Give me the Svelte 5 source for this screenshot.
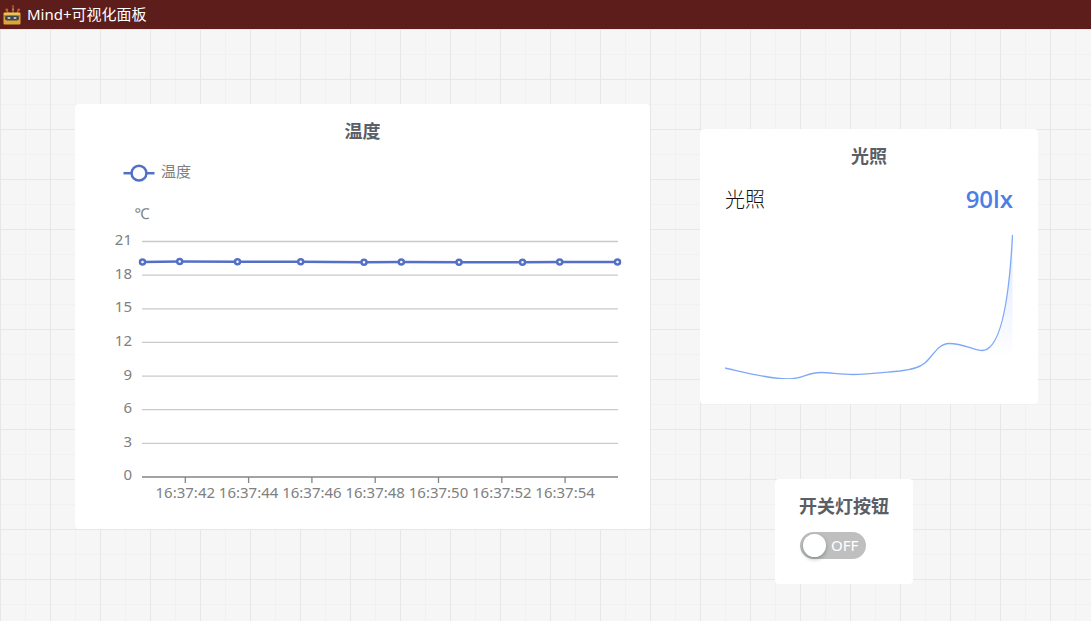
<script>
  const tempTicks = [21, 18, 15, 12, 9, 6, 3, 0];
  const timeTicks = ['16:37:42', '16:37:44', '16:37:46', '16:37:48', '16:37:50', '16:37:52', '16:37:54'];
  const samples = [
    [42.5, 19.18], [79.7, 19.22], [137.5, 19.2], [200.7, 19.2], [264, 19.16],
    [301.3, 19.17], [359, 19.14], [422.5, 19.14], [459.7, 19.18], [517.5, 19.18]
  ];

  const baseY = 328;
  const unit = 235.5 / 21;
  const yOf = (value) => baseY - value * unit;
  const xOfTick = (i) => 85.3 + i * 63.3;
  const linePoints = samples.map(([x, v]) => `${x},${yOf(v)}`).join(' ');

  const lightCurve =
    'M0 133 C18 137 44 144 63 144 C78 144 82 137.5 96 137.5 C106 137.5 114 139.5 128 139.5 C142 139.5 158 137.5 175 136 C186 134.5 194 133 200 128 C208 121 213 108.5 224 108.5 C238 108.5 250 115.5 257 115.5 C275 115.5 284 68 287.5 0';

  let on = $state(false);
</script>

<div class="page">
  <header class="titlebar">
    <svg class="logo" viewBox="0 0 18 20" aria-hidden="true">
      <path d="M10 8V1.5M5.2 8 4 5M13.8 8l1.8-3" stroke="#8d7a58" stroke-width="1.2" fill="none" />
      <circle cx="10" cy="1.2" r="1.2" fill="#a9442e" />
      <circle cx="3.8" cy="5" r="1.4" fill="#d0592d" />
      <circle cx="15.7" cy="4.8" r="1.4" fill="#d0592d" />
      <circle cx="10" cy="4.6" r="1" fill="#c9953f" />
      <rect x="0.5" y="7.6" width="17" height="12" rx="1" fill="#dfa536" />
      <rect x="1.2" y="7.8" width="15.6" height="2" fill="#f0c463" />
      <rect x="0.3" y="10.6" width="17.4" height="1" fill="#8f6c2c" />
      <rect x="2" y="10.8" width="14" height="4.6" rx="2" fill="#41474b" />
      <ellipse cx="6" cy="13" rx="1.6" ry="1" fill="#c5cbc8" />
      <ellipse cx="12" cy="13" rx="1.6" ry="1" fill="#c5cbc8" />
    </svg>
    <span>Mind+可视化面板</span>
  </header>

  <main class="board">
    <section class="card temperature">
      <h2>温度</h2>
      <svg class="chart" viewBox="0 0 525 360" role="img" aria-label="温度">
        <path class="series" d="M23.5 24.2h31" />
        <circle class="legend-dot" cx="39" cy="24.2" r="7.4" />
        <text x="61" y="28">温度</text>
        <text x="42" y="70" text-anchor="middle">℃</text>

        {#each tempTicks as value}
          {#if value > 0}
            <path class="gridline" d={`M42 ${yOf(value)}H518`} />
          {/if}
          <text x="32" y={Math.ceil(yOf(value)) + 3} text-anchor="end">{value}</text>
        {/each}

        <path class="axis" d={`M42 ${baseY}H518`} />
        {#each timeTicks as time, i}
          <path class="axis" d={`M${xOfTick(i)} ${baseY}v6`} />
          <text x={xOfTick(i)} y="349" text-anchor="middle">{time}</text>
        {/each}

        <polyline class="series" points={linePoints} />
        {#each samples as [x, v]}
          <circle class="dot" cx={x} cy={yOf(v)} r="2.5" />
        {/each}
      </svg>
    </section>

    <section class="card light">
      <h2>光照</h2>
      <div class="reading">
        <span class="name">光照</span>
        <strong>90lx</strong>
      </div>
      <svg class="spark" viewBox="0 0 288 144" aria-hidden="true">
        <defs>
          <linearGradient id="fade" x1="0" y1="0" x2="0" y2="1">
            <stop offset="0" stop-color="#dbe6fe" />
            <stop offset="0.85" stop-color="#ffffff" />
          </linearGradient>
        </defs>
        <path d={`${lightCurve}V144H0Z`} fill="url(#fade)" />
        <path d={lightCurve} fill="none" stroke="#7fa9f8" stroke-width="1.3" />
      </svg>
    </section>

    <section class="card switch-card">
      <h2 id="switch-title">开关灯按钮</h2>
      <button
        class="switch"
        class:on
        type="button"
        role="switch"
        aria-checked={on}
        aria-labelledby="switch-title"
        onclick={() => (on = !on)}
      >
        <span class="knob"></span>
        <span class="state">{on ? 'ON' : 'OFF'}</span>
      </button>
    </section>
  </main>
</div>

<style>
  :global(body) {
    margin: 0;
  }

  .page {
    display: flex;
    flex-direction: column;
    min-height: 100vh;
    font-family: 'Noto Sans', 'Noto Sans CJK SC', sans-serif;
    font-size: 15px;
  }

  .titlebar {
    display: flex;
    align-items: center;
    gap: 6px;
    height: 29px;
    padding: 0 3px;
    background: #5c1d1b;
    color: #fff;
    font-size: 15px;
    line-height: 24px;
  }

  .titlebar span {
    padding-bottom: 2px;
  }

  .logo {
    width: 18px;
    height: 20px;
  }

  .board {
    flex: 1;
    display: grid;
    grid-template-columns: repeat(auto-fill, 25px);
    grid-auto-rows: 25px;
    background-color: #f6f6f6;
    background-image:
      linear-gradient(to right, #e7e7e7 1px, transparent 1px),
      linear-gradient(to bottom, #e7e7e7 1px, transparent 1px),
      linear-gradient(to right, #f1f1f1 1px, transparent 1px),
      linear-gradient(to bottom, #f1f1f1 1px, transparent 1px);
    background-size: 50px 50px, 50px 50px, 25px 25px, 25px 25px;
  }

  .card {
    box-sizing: border-box;
    padding: 15px 25px 0;
    border-radius: 4px;
    background: #fff;
  }

  .temperature {
    grid-area: 4 / 4 / span 17 / span 23;
  }

  .light {
    grid-area: 5 / 29 / span 11 / span 13;
    width: 338px;
  }

  .switch-card {
    grid-area: 19 / 32 / span 4 / span 5;
    width: 138px;
    height: 105px;
  }

  h2 {
    display: flex;
    justify-content: center;
    margin: 0;
    color: #5a5e66;
    font-size: 18px;
    font-weight: 700;
    line-height: 24px;
    white-space: nowrap;
  }

  .chart {
    display: block;
    width: 100%;
    margin-top: 6px;
  }

  .chart text {
    fill: #808080;
    font-size: 15px;
  }

  .gridline {
    stroke: #cacaca;
    stroke-width: 1.3;
  }

  .axis {
    stroke: #858585;
    stroke-width: 1.3;
  }

  .series {
    fill: none;
    stroke: #5470c6;
    stroke-width: 2.5;
  }

  .dot,
  .legend-dot {
    fill: #fff;
    stroke: #5470c6;
    stroke-width: 2.5;
  }

  .reading {
    display: flex;
    align-items: center;
    justify-content: space-between;
    height: 34px;
    margin-top: 13px;
  }

  .name {
    color: #111;
    font-size: 20px;
    font-weight: 300;
  }

  strong {
    color: #4b7fe6;
    font-family: 'Open Sans', 'Noto Sans', sans-serif;
    font-size: 24px;
    font-weight: 600;
  }

  .spark {
    display: block;
    width: 100%;
    margin-top: 20px;
  }

  .switch {
    display: flex;
    align-items: center;
    gap: 5px;
    width: 66px;
    height: 27px;
    margin-top: 14px;
    padding: 0 3px;
    border: 0;
    border-radius: 14px;
    background: #bfbfbf;
    color: #fff;
    font: inherit;
    cursor: pointer;
  }

  .switch.on {
    flex-direction: row-reverse;
    background: #4b7fe6;
  }

  .state {
    padding-bottom: 2px;
  }

  .knob {
    width: 23px;
    height: 23px;
    border-radius: 50%;
    background: #fff;
    box-shadow: 0 2px 4px rgba(0, 35, 11, 0.3);
  }
</style>
